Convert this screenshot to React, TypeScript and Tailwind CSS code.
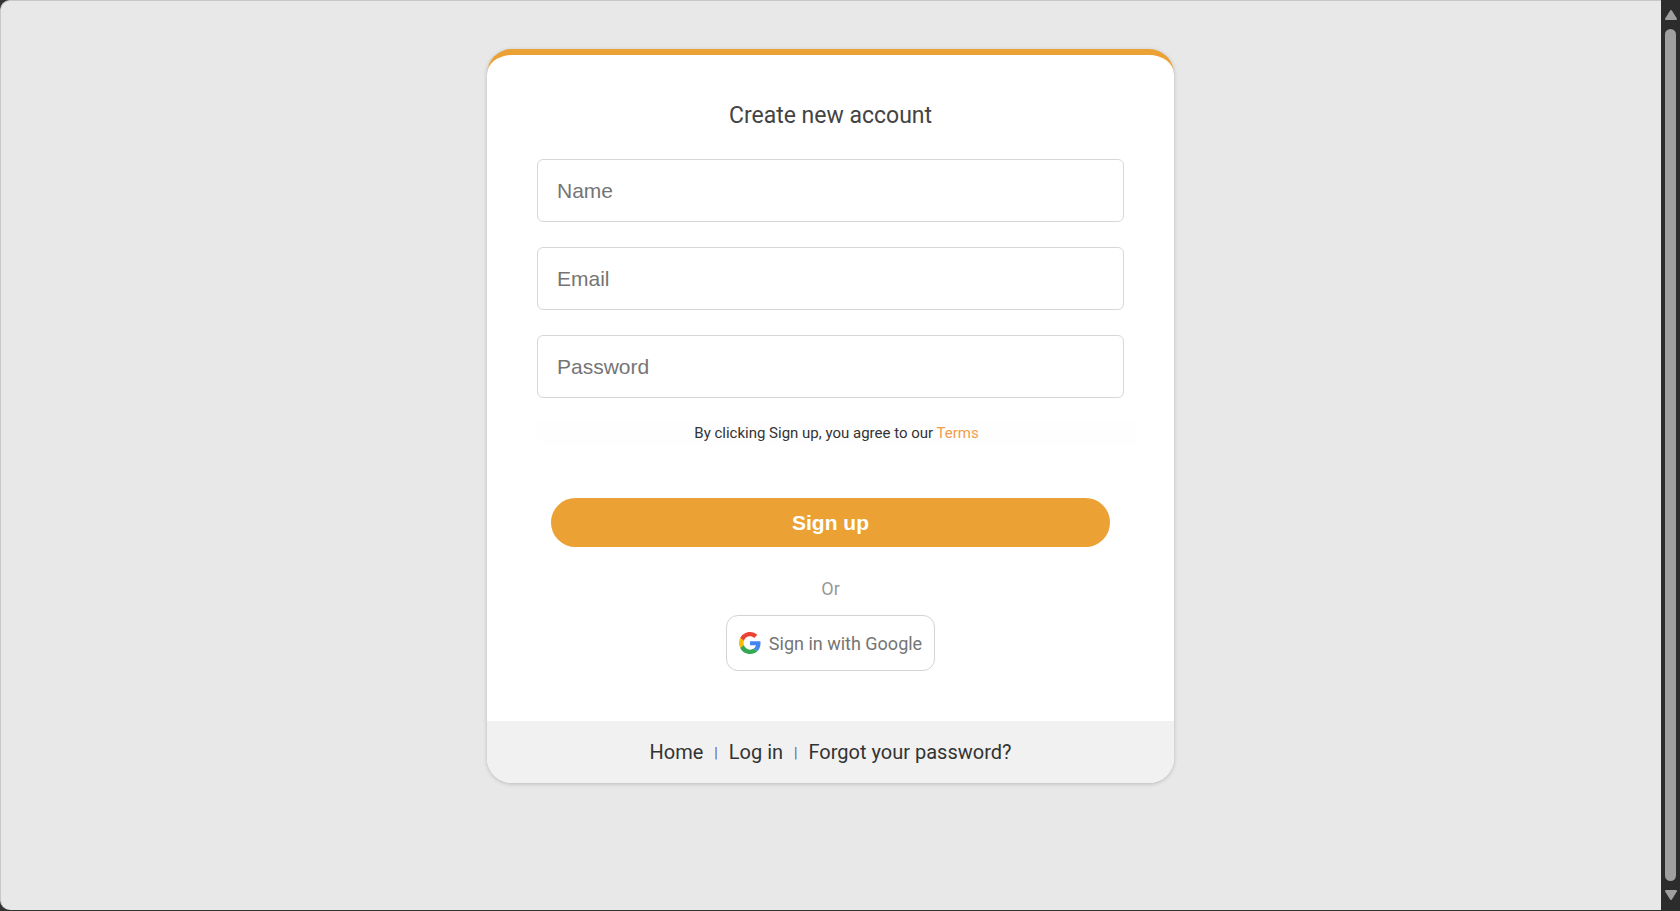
import type { InputHTMLAttributes } from 'react';

interface FieldProps extends InputHTMLAttributes<HTMLInputElement> {
  label: string;
}

function Field({ label, ...rest }: FieldProps) {
  return (
    <input
      aria-label={label}
      placeholder={label}
      className="block w-full h-[63px] px-[19px] border border-[#d7d7d7] rounded-md bg-white text-[21px] text-[#444] placeholder:text-[#757575] font-['Liberation_Sans',Arial,sans-serif] outline-none focus:border-[#eba134]"
      {...rest}
    />
  );
}

function GoogleLogo() {
  return (
    <svg viewBox="0 0 48 48" className="w-[22px] h-[22px] shrink-0" aria-hidden="true">
      <path
        fill="#EA4335"
        d="M24 9.5c3.54 0 6.71 1.22 9.21 3.6l6.85-6.85C35.9 2.38 30.47 0 24 0 14.62 0 6.51 5.38 2.56 13.22l7.98 6.19C12.43 13.72 17.74 9.5 24 9.5z"
      />
      <path
        fill="#4285F4"
        d="M46.98 24.55c0-1.57-.15-3.09-.38-4.55H24v9.02h12.94c-.58 2.96-2.26 5.48-4.78 7.18l7.73 6c4.51-4.18 7.09-10.36 7.09-17.65z"
      />
      <path
        fill="#FBBC05"
        d="M10.53 28.59c-.48-1.45-.76-2.99-.76-4.59s.27-3.14.76-4.59l-7.98-6.19C.92 16.46 0 20.12 0 24s.92 7.54 2.56 10.78l7.97-6.19z"
      />
      <path
        fill="#34A853"
        d="M24 48c6.48 0 11.93-2.13 15.89-5.81l-7.73-6c-2.15 1.45-4.92 2.3-8.16 2.3-6.26 0-11.57-4.22-13.47-9.91l-7.98 6.19C6.51 42.62 14.62 48 24 48z"
      />
    </svg>
  );
}

function Scrollbar() {
  return (
    <div className="w-[19px] shrink-0 flex flex-col items-center gap-2 pt-[9px] pb-[10px] bg-[#2c2c2c]">
      <svg viewBox="0 0 14 12" className="w-[14px] h-3 shrink-0" aria-hidden="true">
        <path d="M7 2 12 10H2z" fill="#9f9f9f" stroke="#9f9f9f" strokeWidth="2" strokeLinejoin="round" />
      </svg>
      <div className="w-[11px] flex-1 rounded-full bg-[#9f9f9f]" />
      <svg viewBox="0 0 14 12" className="w-[14px] h-3 shrink-0" aria-hidden="true">
        <path d="M2 2h10L7 10z" fill="#9f9f9f" stroke="#9f9f9f" strokeWidth="2" strokeLinejoin="round" />
      </svg>
    </div>
  );
}

function SignUpCard() {
  return (
    <div className="w-full max-w-[687px] border-t-[6px] border-[#eba134] rounded-[25px] bg-white shadow-[0_1px_4px_rgba(0,0,0,0.2)] overflow-hidden">
      <form className="flex flex-col px-[50px] pt-[41px] pb-[50px]" onSubmit={(e) => e.preventDefault()}>
        <h1 className="mb-[23px] text-center text-[23px] leading-10 text-[#444]">Create new account</h1>

        <div className="flex flex-col gap-[25px]">
          <Field label="Name" type="text" />
          <Field label="Email" type="email" />
          <Field label="Password" type="password" />
        </div>

        <p className="mt-[22px] -mr-3 bg-[#fefefe] text-center text-[15px] leading-[26px] text-[#333]">
          By clicking Sign up, you agree to our{' '}
          <a href="#terms" className="text-[#f19c4b]">
            Terms
          </a>
        </p>

        <button
          type="submit"
          className="mt-[52px] mx-[14px] h-[49px] rounded-full bg-[#eba134] text-white text-[21px] font-bold font-['Liberation_Sans',Arial,sans-serif] cursor-pointer"
        >
          Sign up
        </button>

        <p className="mt-[30px] mb-[14px] text-center text-[18px] leading-6 text-[#999]">Or</p>

        <button
          type="button"
          className="self-center flex items-center gap-2 h-14 px-3 border border-[#d3d3d3] rounded-xl bg-white text-[18px] text-[#757575] cursor-pointer"
        >
          <GoogleLogo />
          Sign in with Google
        </button>
      </form>

      <nav className="flex items-center justify-center gap-[11px] h-[62px] bg-[#f1f1f1] text-[20px] text-[#333]">
        <a href="#home">Home</a>
        <span className="pt-0.5 text-[14px] text-[#5b55a0]">|</span>
        <a href="#login">Log in</a>
        <span className="pt-0.5 text-[14px] text-[#5b55a0]">|</span>
        <a href="#forgot">Forgot your password?</a>
      </nav>
    </div>
  );
}

export default function App() {
  return (
    <div className="flex h-screen bg-[#333] font-[Roboto,sans-serif]">
      <div className="flex-1 min-w-0 flex pb-px">
        <main className="flex-1 min-w-0 flex justify-center items-start pt-12 pr-px border-t border-l border-[#c8c8c8] rounded-l-[10px] bg-[#e8e8e8] overflow-hidden">
          <SignUpCard />
        </main>
      </div>
      <Scrollbar />
    </div>
  );
}
